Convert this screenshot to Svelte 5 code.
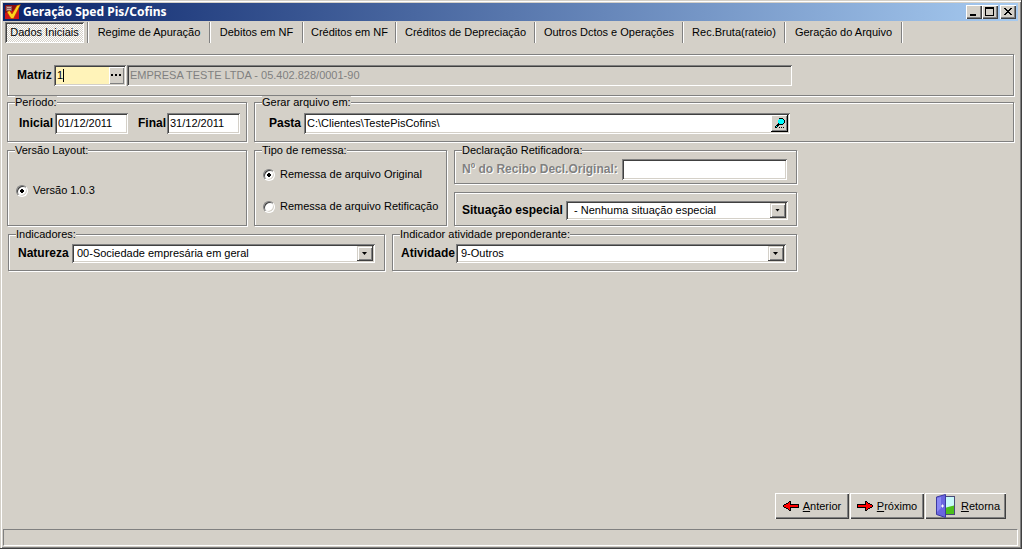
<script lang="ts">
  let tabs = [
    { name: "Dados Iniciais", width: 83 },
    { name: "Regime de Apuração", width: 122 },
    { name: "Debitos em NF", width: 93 },
    { name: "Créditos em NF", width: 93 },
    { name: "Créditos de Depreciação", width: 139 },
    { name: "Outros Dctos e Operações", width: 148 },
    { name: "Rec.Bruta(rateio)", width: 102 },
    { name: "Geração do Arquivo", width: 117 },
  ];
  let current = 0;

  let matriz = "1";
  let empresa = "EMPRESA TESTE LTDA - 05.402.828/0001-90";
  let inicial = "01/12/2011";
  let final = "31/12/2011";
  let pasta = "C:\\Clientes\\TestePisCofins\\";
  let recibo = "";
  let versao = "1.0.3";
  let remessa = "original";

  function anterior() {
    if (current > 0) current -= 1;
  }

  function proximo() {
    if (current < tabs.length - 1) current += 1;
  }
</script>

<div class="window">
  <header class="titlebar">
    <svg class="app-icon" width="16" height="16" viewBox="0 0 16 16">
      <rect x="0" y="1" width="14" height="14" rx="1" fill="#8c0c10" />
      <path d="M0 9 L14 5 V15 H0Z" fill="#d01418" />
      <rect x="1" y="2" width="6" height="5" fill="#8d5a5c" />
      <path d="M2 3.5h4M2 5.5h4" stroke="#d0a8a0" />
      <path d="M2 8 L4.5 6.5 L7 10 L12 1.5 L15.5 .5 L8.5 14.5 L6 14.5Z" fill="#ffd21c" stroke="#a83c00" stroke-width=".5" />
    </svg>
    <h1>Geração Sped Pis/Cofins</h1>
    <button class="caption" aria-label="Minimizar">
      <svg width="12" height="10" shape-rendering="crispEdges"><rect x="2" y="7" width="6" height="2" /></svg>
    </button>
    <button class="caption" aria-label="Maximizar">
      <svg width="12" height="10" shape-rendering="crispEdges">
        <path d="M1 0h9v9h-9z M2 2v6h7v-6z" fill-rule="evenodd" />
      </svg>
    </button>
    <button class="caption close" aria-label="Fechar">
      <svg width="12" height="10" shape-rendering="crispEdges">
        <path d="M2 1h2v1h1v1h2v-1h1v-1h2v1h-1v1h-1v1h-1v1h1v1h1v1h1v1h-2v-1h-1v-1h-2v1h-1v1h-2v-1h1v-1h1v-1h1v-1h-1v-1h-1v-1h-1z" />
      </svg>
    </button>
  </header>

  <nav class="tabs">
    {#each tabs as tab, i}
      <div class="tab-slot" style="width: {tab.width}px">
        <button class="tab" class:active={i === current} on:click={() => (current = i)}>{tab.name}</button>
      </div>
    {/each}
  </nav>

  <main>
    <div class="box matriz">
      <label for="matriz">Matriz</label>
      <div class="field focused">
        <input id="matriz" type="text" bind:value={matriz} />
        <span class="caret"></span>
        <button class="more" aria-label="Procurar matriz">
          <svg width="11" height="2" shape-rendering="crispEdges">
            <path d="M0 0h2v2h-2z M4 0h2v2h-2z M8 0h2v2h-2z" />
          </svg>
        </button>
      </div>
      <div class="field empresa">
        <input type="text" value={empresa} aria-label="Empresa" disabled />
      </div>
    </div>

    <div class="row">
      <fieldset class="box left periodo">
        <legend>Período:</legend>
        <div class="line">
          <label for="inicial">Inicial</label>
          <div class="field date"><input id="inicial" type="text" bind:value={inicial} /></div>
          <label for="final">Final</label>
          <div class="field date"><input id="final" type="text" bind:value={final} /></div>
        </div>
      </fieldset>
      <fieldset class="box grow pasta">
        <legend>Gerar arquivo em:</legend>
        <div class="line">
          <label for="pasta">Pasta</label>
          <div class="field">
            <input id="pasta" type="text" bind:value={pasta} />
            <button class="browse" aria-label="Escolher pasta">
              <svg width="10" height="11" viewBox="0 0 10 11" shape-rendering="crispEdges">
                <path d="M4 0h4v1h1v1h1v3h-1v1h-1v1h-4v1h-1v1h-1v1h-2v-2h1v-1h1v-1h1v-4h1z" />
                <path d="M4 1h4v1h1v3h-1v1h-4v-1h-1v-3h1z M1 8h1v1h-1z" fill="#00ffff" />
                <path d="M4 9h1v1h-1z M6 9h1v1h-1z M8 9h1v1h-1z" />
              </svg>
            </button>
          </div>
        </div>
      </fieldset>
    </div>

    <div class="row">
      <fieldset class="box left versao">
        <legend>Versão Layout:</legend>
        <label class="option">
          <input type="radio" name="versao" value="1.0.3" bind:group={versao} />
          Versão 1.0.3
        </label>
      </fieldset>
      <fieldset class="box remessa">
        <legend>Tipo de remessa:</legend>
        <label class="option">
          <input type="radio" name="remessa" value="original" bind:group={remessa} />
          Remessa de arquivo Original
        </label>
        <label class="option">
          <input type="radio" name="remessa" value="retificacao" bind:group={remessa} />
          Remessa de arquivo Retificação
        </label>
      </fieldset>
      <div class="stack">
        <fieldset class="box recibo">
          <legend>Declaração Retificadora:</legend>
          <div class="line">
            <label class="disabled" for="recibo">Nº do Recibo Decl.Original:</label>
            <div class="field"><input id="recibo" type="text" bind:value={recibo} /></div>
          </div>
        </fieldset>
        <div class="box situacao">
          <label for="situacao">Situação especial</label>
          <div class="field combo">
            <select id="situacao">
              <option>&nbsp;- Nenhuma situação especial</option>
            </select>
            <span class="arrow"></span>
          </div>
        </div>
      </div>
    </div>

    <div class="row indicadores">
      <fieldset class="box natureza">
        <legend>Indicadores:</legend>
        <div class="line">
          <label for="natureza">Natureza</label>
          <div class="field combo">
            <select id="natureza">
              <option>00-Sociedade empresária em geral</option>
            </select>
            <span class="arrow"></span>
          </div>
        </div>
      </fieldset>
      <fieldset class="box atividade">
        <legend>Indicador atividade preponderante:</legend>
        <div class="line">
          <label for="atividade">Atividade</label>
          <div class="field combo">
            <select id="atividade">
              <option>9-Outros</option>
            </select>
            <span class="arrow"></span>
          </div>
        </div>
      </fieldset>
    </div>
  </main>

  <div class="actions">
    <button class="action" on:click={anterior}>
      <svg width="16" height="10" viewBox="0 0 16 10" shape-rendering="crispEdges">
        <path d="M0 4h1v-1h2v-1h2v-1h1v-1h2v3h8v4h-8v3h-2v-1h-1v-1h-2v-1h-2v-1h-1z" />
        <path d="M1 4h2v-1h2v-1h1v-1h1v3h8v2h-8v3h-1v-1h-1v-1h-2v-1h-2z" fill="#f00" />
      </svg>
      <span><u>A</u>nterior</span>
    </button>
    <button class="action" on:click={proximo}>
      <svg width="16" height="10" viewBox="0 0 16 10" shape-rendering="crispEdges">
        <path d="M16 4h-1v-1h-2v-1h-2v-1h-1v-1h-2v3h-8v4h8v3h2v-1h1v-1h2v-1h2v-1h1z" />
        <path d="M15 4h-2v-1h-2v-1h-1v-1h-1v3h-8v2h8v3h1v-1h1v-1h2v-1h2z" fill="#f00" />
      </svg>
      <span><u>P</u>róximo</span>
    </button>
    <button class="action exit">
      <svg width="20" height="24" viewBox="0 0 20 24">
        <rect x="8.5" y="2.5" width="10" height="18" fill="#c8fafa" stroke="#4a4a78" />
        <path d="M9 14 L12 13 L18 11.5 V20 H9Z" fill="#4cc01c" />
        <path d="M.5 3 L9.5 .5 V23.5 L.5 20.5Z" fill="#6a66e0" stroke="#3c3aa0" />
        <path d="M1 4 L5 3 V14 L1 18Z" fill="#8a88f4" />
        <path d="M6.5 10.5v3M5 12h3" stroke="#fff" />
      </svg>
      <span><u>R</u>etorna</span>
    </button>
  </div>

  <footer class="status"></footer>
</div>

<style>
  :global(body) {
    margin: 0;
    background: #d4d0c8;
  }

  .window {
    box-sizing: border-box;
    display: flex;
    flex-direction: column;
    min-height: 100vh;
    padding: 3px 3px 2px;
    background: #d4d0c8;
    border: solid #404040;
    border-width: 0 1px 1px 0;
    box-shadow: inset 1px 1px 0 #d4d0c8, inset 2px 2px 0 #fff, inset -1px -1px 0 #808080;
    font-family: "Liberation Sans", Arial, sans-serif;
    font-size: 11px;
    line-height: 13px;
    color: #000;
  }

  button,
  input,
  select {
    box-sizing: border-box;
    margin: 0;
    padding: 0;
    border: 0;
    border-radius: 0;
    background: none;
    font: inherit;
    color: inherit;
    outline: none;
  }

  svg {
    flex: none;
    display: block;
  }

  /* title bar */
  .titlebar {
    display: flex;
    align-items: center;
    height: 18px;
    padding: 0 2px;
    background: linear-gradient(to right, #0a246a, #a6caf0);
  }

  h1 {
    flex: 1;
    margin: 0 0 0 2px;
    font-family: "Noto Sans", sans-serif;
    font-size: 12px;
    font-weight: bold;
    line-height: 16px;
    color: #fff;
  }

  .caption {
    display: flex;
    width: 16px;
    height: 14px;
    padding: 2px;
    background: #d4d0c8;
    box-shadow: inset 1px 1px 0 #fff, inset -1px -1px 0 #404040, inset -2px -2px 0 #808080;
  }

  .close {
    margin-left: 2px;
  }

  /* tabs */
  .tabs {
    display: flex;
    padding: 1px 0 0 2px;
  }

  .tab-slot {
    box-sizing: border-box;
    flex: none;
    padding-right: 3px;
    border-right: 1px solid #808080;
    box-shadow: 1px 0 0 #fff;
  }

  .tab-slot + .tab-slot {
    padding: 0 2px 0 3px;
  }

  .tab {
    width: 100%;
    height: 21px;
    white-space: nowrap;
  }

  .tab.active {
    background: repeating-conic-gradient(#fff 0 25%, #d4d0c8 0 50%) 0 0 / 2px 2px;
    box-shadow: inset 1px 1px 0 #808080, inset -1px -1px 0 #fff, inset 2px 2px 0 #404040;
  }

  /* group boxes */
  main {
    flex: 1;
    padding: 11px 4px 0;
  }

  .box {
    box-sizing: border-box;
    min-width: 0;
    margin: 0;
    padding: 0;
    border: 1px solid #808080;
    box-shadow: 1px 1px 0 #fff, inset 1px 1px 0 #fff;
  }

  legend {
    margin-left: 7px;
    padding: 0;
    background: #d4d0c8;
  }

  .row {
    display: flex;
    gap: 7px;
    margin-bottom: 2px;
  }

  .line,
  .matriz,
  .situacao {
    display: flex;
    align-items: center;
  }

  .line label,
  .matriz label,
  .situacao label {
    flex: none;
    font-size: 12px;
    font-weight: bold;
    white-space: nowrap;
  }

  .matriz {
    height: 42px;
    padding-left: 9px;
  }

  .matriz label {
    width: 37px;
  }

  .left {
    width: 240px;
  }

  .grow {
    flex: 1;
  }

  .periodo,
  .pasta {
    height: 46px;
  }

  .periodo .line,
  .pasta .line {
    padding-top: 4px;
  }

  .periodo label {
    width: 36px;
    margin-left: 11px;
  }

  .periodo label + .field + label {
    width: 29px;
    margin-left: 10px;
  }

  .pasta label {
    width: 35px;
    margin-left: 14px;
  }

  .versao,
  .remessa {
    height: 82px;
  }

  .remessa {
    width: 193px;
  }

  .stack {
    display: flex;
    flex-direction: column;
    gap: 8px;
    width: 343px;
  }

  .recibo {
    height: 40px;
  }

  .recibo .line {
    padding-top: 2px;
  }

  .recibo label {
    width: 160px;
    margin-left: 7px;
  }

  .situacao {
    height: 34px;
    padding: 2px 0 0 7px;
  }

  .situacao label {
    width: 104px;
  }

  .line .disabled {
    color: #808080;
    text-shadow: 1px 1px 0 #fff;
  }

  .natureza,
  .atividade {
    height: 43px;
  }

  .indicadores {
    margin-left: 1px;
  }

  .natureza {
    width: 377px;
  }

  .natureza label {
    width: 54px;
    margin-left: 9px;
  }

  .atividade {
    width: 405px;
  }

  .atividade label {
    width: 55px;
    margin-left: 8px;
  }

  .natureza .line,
  .atividade .line {
    padding-top: 3px;
  }

  /* fields */
  .field {
    position: relative;
    box-sizing: border-box;
    display: flex;
    flex: none;
    height: 21px;
    padding: 2px;
    background: #fff;
    box-shadow: inset 1px 1px 0 #808080, inset -1px -1px 0 #fff, inset 2px 2px 0 #404040, inset -2px -2px 0 #d4d0c8;
  }

  .field input {
    flex: 1;
    min-width: 0;
    padding: 0 1px;
  }

  .focused {
    width: 72px;
    background: #fff3b9;
  }

  .caret {
    position: absolute;
    left: 9px;
    top: 4px;
    width: 1px;
    height: 13px;
    background: #000;
  }

  .empresa {
    width: 665px;
    margin-left: 1px;
    background: #d4d0c8;
    box-shadow: inset 1px 1px 0 #808080, inset -1px -1px 0 #fff, inset 2px 2px 0 #404040;
  }

  .empresa input {
    color: #808080;
  }

  .date {
    width: 73px;
  }

  .pasta .field {
    width: 486px;
  }

  .recibo .field {
    width: 165px;
  }

  .more,
  .browse {
    display: flex;
    align-items: center;
    justify-content: center;
    width: 15px;
    background: #d4d0c8;
    box-shadow: inset 1px 1px 0 #fff, inset -1px -1px 0 #808080;
  }

  .browse {
    width: 17px;
    box-shadow: inset -1px -1px 0 #000, inset 1px 1px 0 #fff, inset -2px -2px 0 #808080;
  }

  .combo {
    height: 19px;
  }

  .situacao .combo {
    width: 222px;
  }

  .natureza .combo {
    width: 303px;
  }

  .atividade .combo {
    width: 330px;
  }

  select {
    flex: 1;
    appearance: none;
    padding: 0 18px 0 3px;
  }

  .arrow {
    position: absolute;
    top: 2px;
    right: 2px;
    bottom: 2px;
    width: 16px;
    background: #d4d0c8;
    box-shadow: inset -1px -1px 0 #404040, inset 1px 1px 0 #d4d0c8, inset 2px 2px 0 #fff, inset -2px -2px 0 #808080;
    pointer-events: none;
  }

  .arrow::after {
    content: "";
    position: absolute;
    left: 5px;
    top: 6px;
    width: 5px;
    height: 3px;
    background: #000;
    clip-path: polygon(0 0, 100% 0, 50% 100%);
  }

  /* radios */
  .option {
    display: flex;
    align-items: center;
    gap: 5px;
    padding-left: 8px;
    white-space: nowrap;
  }

  .versao .option {
    margin-top: 27px;
  }

  .remessa .option {
    margin-top: 11px;
  }

  .remessa .option + .option {
    margin-top: 19px;
  }

  .option input {
    appearance: none;
    width: 12px;
    height: 12px;
    border: 1px solid;
    border-color: #808080 #fff #fff #808080;
    border-radius: 50%;
    background: #fff;
    box-shadow: inset 1px 1px 0 #404040, inset -1px -1px 0 #d4d0c8;
  }

  .option input:checked {
    background: radial-gradient(circle, #000 0 2px, #fff 2px);
  }

  /* bottom bar */
  .actions {
    display: flex;
    justify-content: flex-end;
    gap: 1px;
    padding: 0 12px 10px 0;
  }

  .action {
    display: flex;
    align-items: center;
    justify-content: center;
    gap: 4px;
    width: 74px;
    height: 26px;
    background: #d4d0c8;
    box-shadow: inset 1px 1px 0 #fff, inset -1px -1px 0 #404040, inset -2px -2px 0 #808080;
  }

  .exit {
    gap: 5px;
    width: 81px;
    padding-left: 5px;
  }

  .status {
    height: 15px;
    border: 1px solid;
    border-color: #808080 #fff #fff #808080;
  }
</style>
